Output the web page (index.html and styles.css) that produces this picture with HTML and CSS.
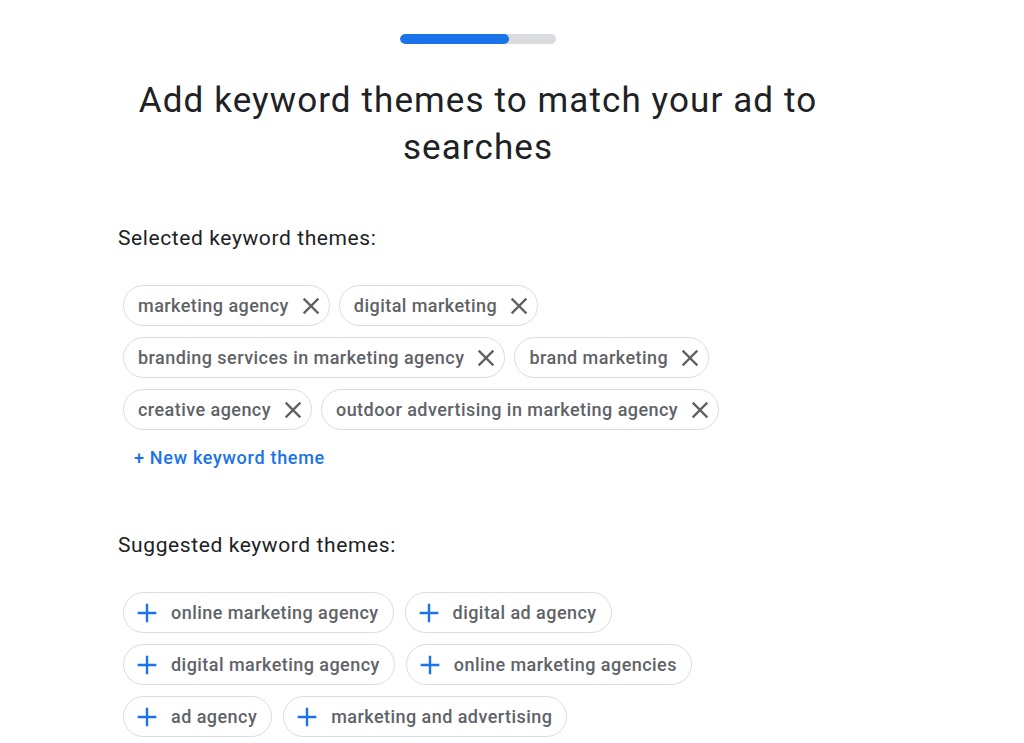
FILE: index.html
```html
<!DOCTYPE html>
<html>
<head>
<meta charset="utf-8">
<link rel="stylesheet" href="styles.css">
</head>
<body>
<div class="page">
  <div class="progress"><div class="progress-fill" style="width:70%"></div></div>
  <h1 class="title">Add keyword themes to match your ad to searches</h1>

  <section class="section">
    <h2 class="section-title">Selected keyword themes:</h2>
    <div class="chips">
      <div class="chip-row">
        <span class="chip">marketing agency<svg class="x" viewBox="0 0 24 24"><path d="M19 6.41L17.59 5 12 10.59 6.41 5 5 6.41 10.59 12 5 17.59 6.41 19 12 13.41 17.59 19 19 17.59 13.41 12z"/></svg></span>
        <span class="chip">digital marketing<svg class="x" viewBox="0 0 24 24"><path d="M19 6.41L17.59 5 12 10.59 6.41 5 5 6.41 10.59 12 5 17.59 6.41 19 12 13.41 17.59 19 19 17.59 13.41 12z"/></svg></span>
      </div>
      <div class="chip-row">
        <span class="chip">branding services in marketing agency<svg class="x" viewBox="0 0 24 24"><path d="M19 6.41L17.59 5 12 10.59 6.41 5 5 6.41 10.59 12 5 17.59 6.41 19 12 13.41 17.59 19 19 17.59 13.41 12z"/></svg></span>
        <span class="chip">brand marketing<svg class="x" viewBox="0 0 24 24"><path d="M19 6.41L17.59 5 12 10.59 6.41 5 5 6.41 10.59 12 5 17.59 6.41 19 12 13.41 17.59 19 19 17.59 13.41 12z"/></svg></span>
      </div>
      <div class="chip-row">
        <span class="chip">creative agency<svg class="x" viewBox="0 0 24 24"><path d="M19 6.41L17.59 5 12 10.59 6.41 5 5 6.41 10.59 12 5 17.59 6.41 19 12 13.41 17.59 19 19 17.59 13.41 12z"/></svg></span>
        <span class="chip">outdoor advertising in marketing agency<svg class="x" viewBox="0 0 24 24"><path d="M19 6.41L17.59 5 12 10.59 6.41 5 5 6.41 10.59 12 5 17.59 6.41 19 12 13.41 17.59 19 19 17.59 13.41 12z"/></svg></span>
      </div>
    </div>
    <a class="new-theme" href="#">+ New keyword theme</a>
  </section>

  <section class="section suggested">
    <h2 class="section-title">Suggested keyword themes:</h2>
    <div class="chips">
      <div class="chip-row">
        <span class="chip add"><svg class="plus" viewBox="0 0 24 24"><path d="M19 12.9h-6.1V19h-1.8v-6.1H5v-1.8h6.1V5h1.8v6.1H19z"/></svg>online marketing agency</span>
        <span class="chip add"><svg class="plus" viewBox="0 0 24 24"><path d="M19 12.9h-6.1V19h-1.8v-6.1H5v-1.8h6.1V5h1.8v6.1H19z"/></svg>digital ad agency</span>
      </div>
      <div class="chip-row">
        <span class="chip add"><svg class="plus" viewBox="0 0 24 24"><path d="M19 12.9h-6.1V19h-1.8v-6.1H5v-1.8h6.1V5h1.8v6.1H19z"/></svg>digital marketing agency</span>
        <span class="chip add"><svg class="plus" viewBox="0 0 24 24"><path d="M19 12.9h-6.1V19h-1.8v-6.1H5v-1.8h6.1V5h1.8v6.1H19z"/></svg>online marketing agencies</span>
      </div>
      <div class="chip-row">
        <span class="chip add"><svg class="plus" viewBox="0 0 24 24"><path d="M19 12.9h-6.1V19h-1.8v-6.1H5v-1.8h6.1V5h1.8v6.1H19z"/></svg>ad agency</span>
        <span class="chip add"><svg class="plus" viewBox="0 0 24 24"><path d="M19 12.9h-6.1V19h-1.8v-6.1H5v-1.8h6.1V5h1.8v6.1H19z"/></svg>marketing and advertising</span>
      </div>
    </div>
  </section>
</div>
</body>
</html>
```

FILE: styles.css
```css
html, body {
  margin: 0;
  padding: 0;
  background: #ffffff;
}
body {
  font-family: Roboto, "Liberation Sans", sans-serif;
  color: #202124;
  overflow: hidden;
}
.page {
  width: 720px;
  margin-left: 118px;
  padding-top: 34px;
}
.progress {
  width: 156px;
  height: 10px;
  border-radius: 5px;
  background: #dadce0;
  margin-left: 282px;
  overflow: hidden;
}
.progress-fill {
  height: 100%;
  background: #1a73e8;
  border-radius: 5px;
}
.title {
  margin: 33px 0 0 0;
  text-align: center;
  font-weight: 400;
  font-size: 35px;
  line-height: 47px;
  color: #202124;
  letter-spacing: 1.1px;
}
.section {
  margin-top: 55px;
}
.section-title {
  margin: 0;
  font-size: 21px;
  font-weight: 400;
  line-height: 24px;
  color: #202124;
  letter-spacing: 0.6px;
}
.chips {
  margin-top: 35px;
  margin-left: 5px;
  display: flex;
  flex-direction: column;
  align-items: flex-start;
  row-gap: 11px;
}
.chip-row {
  display: flex;
  column-gap: 9px;
}
.suggested .chip-row {
  column-gap: 11px;
}
.chip {
  box-sizing: border-box;
  height: 41px;
  display: inline-flex;
  align-items: center;
  border: 1px solid #dadce0;
  border-radius: 21px;
  padding: 0 4px 0 14px;
  font-size: 18px;
  font-weight: 500;
  letter-spacing: 0.45px;
  color: #5f6368;
  white-space: nowrap;
}
.x {
  width: 28px;
  height: 28px;
  fill: #5f6368;
  margin-left: 8px;
  flex: none;
}
.chip.add {
  padding: 0 14px 0 7px;
}
.plus {
  width: 32px;
  height: 32px;
  fill: #1a73e8;
  margin-right: 8px;
  flex: none;
}
.new-theme {
  display: inline-block;
  margin-top: 17px;
  margin-left: 16px;
  font-size: 18px;
  font-weight: 500;
  letter-spacing: 0.7px;
  color: #1a73e8;
  text-decoration: none;
  line-height: 22px;
}
.suggested {
  margin-top: 64px;
}
```
